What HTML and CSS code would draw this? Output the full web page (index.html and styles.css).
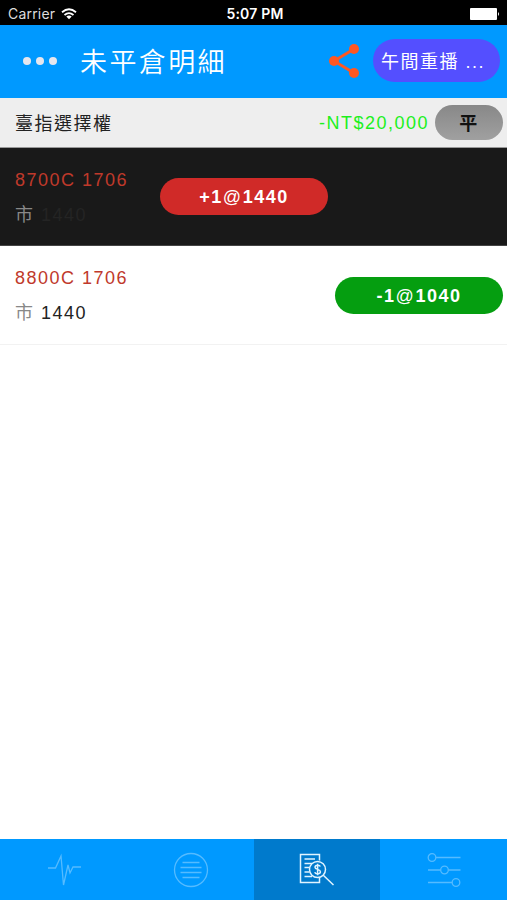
FILE: index.html
```html
<!DOCTYPE html>
<html lang="zh-Hant">
<head>
  <meta charset="UTF-8">
  <title>未平倉明細</title>
  <meta name="viewport" content="width=device-width, initial-scale=1.0">
  <link rel="stylesheet" href="styles.css">
</head>
<body>

  <div class="status-bar">
    <div class="carrier">
      <span>Carrier</span>
      <svg width="16" height="12" viewBox="0 0 16 12" fill="none" stroke="#fff" stroke-width="1.8">
        <path d="M1 4.2 Q8 -1.8 15 4.2"/>
        <path d="M3.5 7 Q8 3.2 12.5 7"/>
        <path d="M8 11.3 L5.3 8.6 Q8 6.6 10.7 8.6 Z" fill="#fff" stroke="none"/>
      </svg>
    </div>
    <div class="time">5:07 PM</div>
    <div class="battery">
      <svg width="30" height="12" viewBox="0 0 30 12" fill="#fff">
        <rect x="0" y="0" width="27" height="12" rx="1"/>
        <path d="M28 4 Q30 6 28 8 Z"/>
      </svg>
    </div>
  </div>

  <header class="header">
    <div class="menu"><i></i><i></i><i></i></div>
    <h1>未平倉明細</h1>
    <svg class="share" width="32" height="36" viewBox="0 0 32 36" fill="#ff5722">
      <path d="M26 6 L6 18 L26 30" fill="none" stroke="#ff5722" stroke-width="2.8"/>
      <circle cx="6" cy="18" r="5"/>
      <circle cx="26" cy="6" r="5"/>
      <circle cx="26" cy="30" r="5"/>
    </svg>
    <button class="session">午間重播 ...</button>
  </header>

  <div class="section">
    <span class="section-name">臺指選擇權</span>
    <span class="amount">-NT$20,000</span>
    <button class="close-btn">平</button>
  </div>

  <main class="list">
    <div class="row selected">
      <div class="info">
        <div class="contract">8700C 1706</div>
        <div class="price"><span>市</span> 1440</div>
      </div>
      <div class="badge buy">+1<span>@</span>1440</div>
    </div>
    <div class="row">
      <div class="info">
        <div class="contract">8800C 1706</div>
        <div class="price"><span>市</span> 1440</div>
      </div>
      <div class="badge sell">-1<span>@</span>1040</div>
    </div>
  </main>

  <nav class="tabs">
    <div class="tab">
      <svg width="36" height="36" viewBox="0 0 36 36">
        <path d="M2 16 H9.5 L15 4 L17.5 33 L22 13 L24 21 L27 15 H35"/>
      </svg>
    </div>
    <div class="tab">
      <svg width="36" height="36" viewBox="0 0 36 36">
        <circle cx="18" cy="18" r="16.5"/>
        <path d="M9.5 10.5 H26.5 M7.5 15.5 H28.5 M7.5 20.5 H28.5 M9.5 25.5 H26.5"/>
      </svg>
    </div>
    <div class="tab active">
      <svg width="36" height="36" viewBox="0 0 36 36">
        <path d="M20.5 8.5 V2.5 H1.5 V30.5 H20.5 V25.5"/>
        <path d="M5.5 7 H16 M5.5 11.5 H13 M5.5 15.5 H10.5 M5.5 20 H10.5 M5.5 24.5 H13"/>
        <circle cx="18.5" cy="17.5" r="8"/>
        <path d="M24.3 23.3 L34.5 33"/>
        <path d="M21.3 14.5 C20.5 12.5 16 12.7 16 15.2 C16 17.8 21.4 17 21.4 19.8 C21.4 22.5 16.5 22.5 15.7 20.3 M18.6 11.7 V23.3"/>
      </svg>
    </div>
    <div class="tab">
      <svg width="36" height="36" viewBox="0 0 36 36">
        <path d="M10 5.5 H34.5 M2 18 H14.5 M22.5 18 H34.5 M2 30.5 H26"/>
        <circle cx="6" cy="5.5" r="3.8"/>
        <circle cx="18.5" cy="18" r="3.8"/>
        <circle cx="30" cy="30.5" r="3.8"/>
      </svg>
    </div>
  </nav>

</body>
</html>
```
FILE: styles.css
```css
* {
  box-sizing: border-box;
}

body {
  margin: 0;
  height: 100vh;
  display: flex;
  flex-direction: column;
  background: #fff;
  color: #222;
  font-family: "Liberation Sans", "Noto Sans CJK TC", sans-serif;
  font-size: 18px;
  letter-spacing: 1.5px;
  overflow: hidden;
}

button {
  border: none;
  padding: 0;
  font-family: inherit;
  letter-spacing: inherit;
}

.status-bar {
  height: 25px;
  padding: 2px 7px 0 8px;
  display: grid;
  grid-template-columns: 1fr auto 1fr;
  align-items: center;
  background: #000;
  color: #fff;
  font-family: Inter, sans-serif;
  font-size: 14px;
  letter-spacing: 0.2px;
}

.carrier {
  display: flex;
  align-items: center;
  gap: 6px;
  color: #ddd;
}

.time {
  padding-left: 2px;
  font-weight: 600;
}

.battery {
  display: flex;
  justify-content: flex-end;
}

.header {
  height: 73px;
  padding: 0 7px 2px 23px;
  display: flex;
  align-items: center;
  background: #0099ff;
}

.menu {
  display: flex;
  gap: 5px;
}

.menu i {
  width: 8px;
  height: 8px;
  border-radius: 50%;
  background: #e6e6ee;
}

.header h1 {
  flex: 1;
  margin: 0 0 0 23px;
  color: #fff;
  font-size: 27px;
  font-weight: 350;
  letter-spacing: 2.4px;
}

.share {
  margin-right: 13px;
}

.session {
  width: 127px;
  height: 43px;
  padding: 0 0 2px 8px;
  border-radius: 22px;
  background: #544fff;
  color: #fff;
  font-size: 18px;
  text-align: left;
  white-space: nowrap;
}

.section {
  height: 50px;
  padding: 0 4px 0 15px;
  display: flex;
  align-items: center;
  background: #eee;
  border-bottom: 1px solid #999;
}

.section-name {
  flex: 1;
  padding-bottom: 2px;
}

.amount {
  padding-top: 2px;
  margin-right: 6px;
  color: #1cf01c;
}

.close-btn {
  width: 68px;
  height: 35px;
  padding-bottom: 2px;
  border-radius: 18px;
  background: linear-gradient(#888, #a0a0a0);
  color: #111;
  font-size: 18px;
  font-weight: bold;
}

.list {
  flex: 1;
}

.row {
  height: 99px;
  padding: 0 4px 0 15px;
  display: flex;
  align-items: center;
  justify-content: space-between;
  border-bottom: 1px solid #f2f2f2;
}

.row.selected {
  height: 98px;
  justify-content: flex-start;
  background: #191919;
  border-bottom-color: #444;
}

.info {
  width: 145px;
  padding-top: 2px;
}

.contract {
  line-height: 35px;
  color: #c0392b;
}

.price {
  line-height: 35px;
}

.price span {
  color: #888;
}

.selected .price {
  color: #242424;
}

.badge {
  width: 168px;
  height: 37px;
  border-radius: 19px;
  color: #fff;
  font-weight: bold;
  line-height: 39px;
  text-align: center;
}

.badge span {
  font-weight: normal;
}

.buy {
  background: #d02a28;
}

.sell {
  background: #059e10;
}

.tabs {
  height: 61px;
  display: flex;
  background: #0099ff;
}

.tab {
  flex: 1;
  padding-left: 1px;
  display: flex;
  align-items: center;
  justify-content: center;
}

.tab svg {
  fill: none;
  stroke: #55bbff;
  stroke-width: 1.3;
}

.tab.active {
  padding-left: 0;
  background: #007acc;
}

.tab.active svg {
  stroke: #e0f4ff;
  stroke-width: 1.5;
}
```
